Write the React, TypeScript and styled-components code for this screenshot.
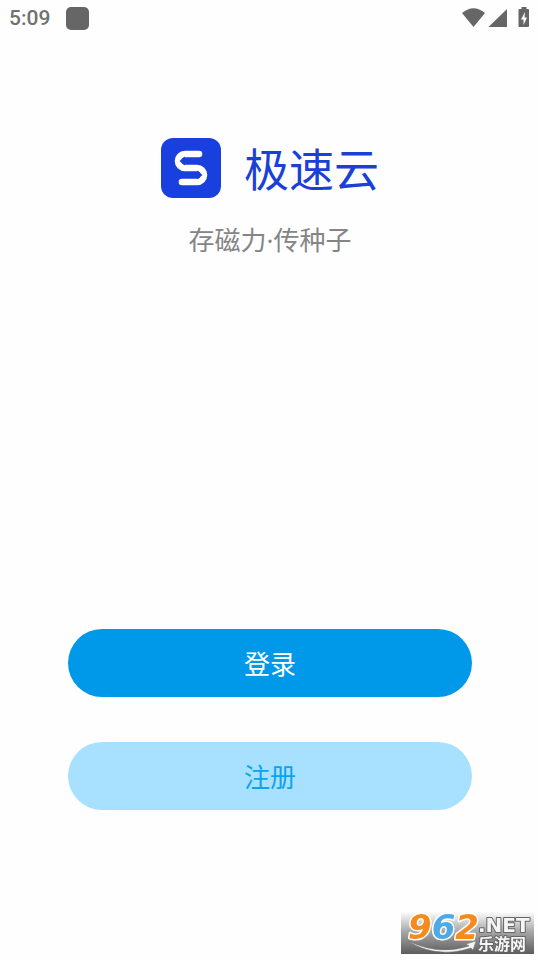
import React from "react";
import styled, { createGlobalStyle } from "styled-components";

const GlobalStyle = createGlobalStyle`
  * { box-sizing: border-box; }
  body {
    margin: 0;
    background: #fefefe;
    font-family: "Noto Sans CJK SC", "Noto Sans", sans-serif;
  }
`;

const Screen = styled.div`
  display: flex;
  flex-direction: column;
  min-height: 100vh;
`;

const StatusBar = styled.header`
  display: flex;
  align-items: center;
  justify-content: space-between;
  height: 36px;
  padding: 0 9px;
`;

const StatusGroup = styled.div`
  display: flex;
  align-items: center;
  gap: 16px;
`;

const Clock = styled.time`
  font: 500 21px/24px Roboto, sans-serif;
  color: #707070;
`;

const Notification = styled.span`
  width: 23px;
  height: 23px;
  border-radius: 5px;
  background: #666;
`;

const Intro = styled.main`
  display: flex;
  flex: 1;
  flex-direction: column;
  align-items: center;
  padding-top: 102px;
`;

const Brand = styled.div`
  display: flex;
  align-items: center;
  gap: 23px;
  height: 60px;
`;

const Title = styled.h1`
  margin: 0;
  font-size: 45px;
  font-weight: 400;
  line-height: 60px;
  color: #1a40d6;
`;

const Tagline = styled.p`
  margin: 24px 0 0;
  font-family: "Noto Sans", "Noto Sans CJK SC", sans-serif;
  font-size: 26px;
  line-height: 36px;
  color: #858585;
`;

const Actions = styled.div`
  display: flex;
  flex-direction: column;
  gap: 45px;
  padding: 0 68px 150px;
`;

const ActionButton = styled.button<{ $primary?: boolean }>`
  height: 68px;
  padding: 0;
  border: 0;
  border-radius: 34px;
  font-family: inherit;
  font-size: 26px;
  line-height: 36px;
  cursor: pointer;
  background: ${(p) => (p.$primary ? "#0098e8" : "#a8e1ff")};
  color: ${(p) => (p.$primary ? "#fff" : "#0ba4ed")};
`;

const Watermark = styled.aside`
  position: fixed;
  right: 6px;
  bottom: 6px;
  height: 42px;
  background: linear-gradient(#fdfdfd, #aaa 45%, #5c5c5c);
`;

const Drawing = styled.svg`
  display: block;
  flex: none;
  overflow: visible;
`;

function AppLogo() {
  return (
    <Drawing width="60" height="60" viewBox="0 0 60 60" aria-hidden="true">
      <rect width="60" height="60" rx="12" fill="#1a3fdf" />
      <path
        d="M38 16H24A7 7 0 0 0 24 30H36A7 7 0 0 1 36 44H21"
        fill="none"
        stroke="#fff"
        strokeWidth="6.6"
        strokeLinecap="round"
      />
      <path d="M18.500 23L24 18.500V27.500Z M41.500 37L36 32.500V41.500Z" fill="#1a3fdf" />
    </Drawing>
  );
}

function StatusIcons() {
  return (
    <Drawing width="70" height="24" viewBox="0 0 70 24" fill="#666" role="img" aria-label="Wi-Fi, 信号, 充电">
      <path d="M1 7Q12.500 -2.500 24 7L12.500 21Z" />
      <path d="M46 3V21H27.500Z" />
      <path d="M60.500 1H65.500V3H67Q68 3 68 4V20Q68 21 67 21H58.500Q57.500 21 57.500 20V4Q57.500 3 58.500 3H60.500Z" />
      <path d="M64 6L60 13.500H62.500V19L66 11.500H63.500Z" fill="#fff" />
    </Drawing>
  );
}

function SiteWatermark() {
  return (
    <Watermark>
      <Drawing width="133" height="42" viewBox="0 0 133 42" role="img" aria-label="962.NET 乐游网">
        <path d="M7 29Q38 44 68 34L65 32L75 29L72 38L70 36Q35 47 7 29Z" fill="#f4f4f4" stroke="#777" strokeWidth="0.5" />
        <g
          fontFamily="DejaVu Sans, sans-serif"
          fontWeight="700"
          fontStyle="italic"
          fontSize="34"
          stroke="#fff"
          strokeWidth="3"
          strokeLinejoin="round"
          paintOrder="stroke"
        >
          <text x="7" y="27">
            <tspan fill="#f58b1f">9</tspan>
            <tspan fill="#4eaae4">6</tspan>
            <tspan fill="#f58b1f">2</tspan>
          </text>
        </g>
        <g fill="#f5f5f5" stroke="#666" strokeWidth="2" strokeLinejoin="round" paintOrder="stroke" fontWeight="700">
          <text x="77" y="20" fontFamily="DejaVu Sans, sans-serif" fontSize="20">.NET</text>
          <text x="77" y="38" fontFamily="Noto Sans CJK SC, sans-serif" fontSize="16">乐游网</text>
        </g>
      </Drawing>
    </Watermark>
  );
}

export default function App() {
  return (
    <>
      <GlobalStyle />
      <Screen>
        <StatusBar>
          <StatusGroup>
            <Clock>5:09</Clock>
            <Notification />
          </StatusGroup>
          <StatusIcons />
        </StatusBar>
        <Intro>
          <Brand>
            <AppLogo />
            <Title>极速云</Title>
          </Brand>
          <Tagline>存磁力·传种子</Tagline>
        </Intro>
        <Actions>
          <ActionButton type="button" $primary>登录</ActionButton>
          <ActionButton type="button">注册</ActionButton>
        </Actions>
      </Screen>
      <SiteWatermark />
    </>
  );
}
